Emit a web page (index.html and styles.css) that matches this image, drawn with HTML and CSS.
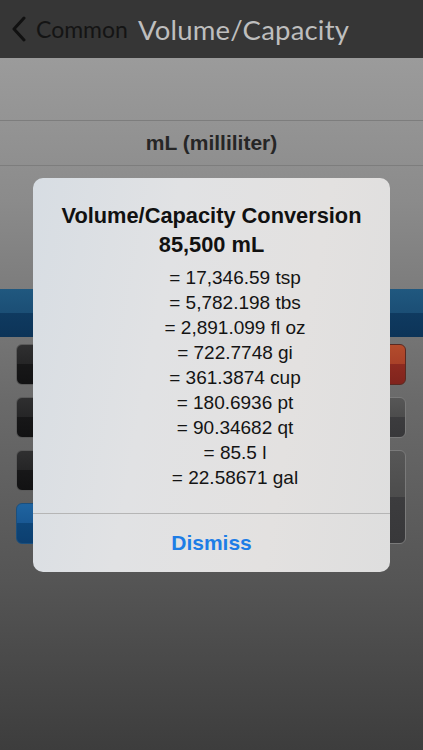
FILE: index.html
```html
<!DOCTYPE html>
<html lang="en">
<head>
  <meta charset="UTF-8" />
  <title>Volume/Capacity</title>
  <meta name="viewport" content="width=device-width, initial-scale=1.0">
  <link rel="stylesheet" href="styles.css">
</head>
<body>
  <div class="screen">
    <div class="navbar">
      <span class="back">
        <svg width="16" height="26" viewBox="0 0 16 26"><path d="M13 2 L3 13 L13 24" fill="none" stroke="#111" stroke-width="3" stroke-linecap="round" stroke-linejoin="round"/></svg>
        Common
      </span>
      <span class="title">Volume/Capacity</span>
    </div>

    <div class="top-gap"></div>
    <div class="unit-row">mL (milliliter)</div>
    <div class="unit-row">tsp (US teaspoon)</div>
    <div class="spacer"></div>

    <div class="value-bar"></div>

    <div class="keypad">
      <div class="key dark"></div>
      <div class="key dark"></div>
      <div class="key dark"></div>
      <div class="key red"></div>
      <div class="key dark"></div>
      <div class="key dark"></div>
      <div class="key dark"></div>
      <div class="key gray"></div>
      <div class="key dark"></div>
      <div class="key dark"></div>
      <div class="key dark"></div>
      <div class="key gray tall"></div>
      <div class="key blue"></div>
      <div class="key dark"></div>
      <div class="key dark"></div>
    </div>

    <!-- alert sits over the converter -->
    <div class="alert">
      <div class="alert-body">
        <div class="alert-title">Volume/Capacity Conversion<br>85,500 mL</div>
        <div class="results">
          = 17,346.59 tsp<br>
          = 5,782.198 tbs<br>
          = 2,891.099 fl oz<br>
          = 722.7748 gi<br>
          = 361.3874 cup<br>
          = 180.6936 pt<br>
          = 90.34682 qt<br>
          = 85.5 l<br>
          = 22.58671 gal
        </div>
      </div>
      <div class="alert-button">Dismiss</div>
    </div>
  </div>
</body>
</html>
```

FILE: styles.css
```css
body {
  margin: 0;
  font-family: "Liberation Sans", Arial, sans-serif;
  background: #3d3d3d;
}

.screen {
  position: relative;
  width: 423px;
  height: 750px;
  overflow: hidden;
  background: linear-gradient(to bottom, #9b9b9b 58px, #8b8b8b 200px, #6a6a6a 400px, #555 580px, #3d3d3d 750px);
}

.navbar {
  height: 58px;
  background: #363636;
  display: flex;
  align-items: center;
  padding-left: 11px;
  font-family: Lato, "Open Sans", sans-serif;
}

.back {
  display: flex;
  align-items: center;
  gap: 9px;
  color: #141414;
  font-size: 23px;
}

.title {
  margin-left: 10px;
  color: #bebebe;
  font-size: 27.5px;
  letter-spacing: 0.2px;
}

.top-gap {
  height: 62px;
}

.unit-row {
  height: 44px;
  border-top: 1px solid #7d7d7d;
  display: flex;
  align-items: center;
  justify-content: center;
  font-size: 21px;
  font-weight: bold;
  color: #262626;
}

.spacer {
  height: 79px;
}

.value-bar {
  height: 48px;
  background: linear-gradient(to bottom, #20587f 0%, #1b4e75 50%, #0f3a60 50%, #0d3458 100%);
}

.keypad {
  display: grid;
  grid-template-columns: repeat(4, 1fr);
  grid-auto-rows: 41px;
  gap: 12px 10px;
  padding: 7px 17px 0 16px;
}

.key {
  border-radius: 6px;
  border: 1px solid #5a5a5a;
}

.key.dark {
  background: linear-gradient(to bottom, #2f2f30 0%, #252526 50%, #171718 50%, #121213 100%);
}

.key.red {
  border-color: #5a2a22;
  background: linear-gradient(to bottom, #b34c2c 0%, #a84028 50%, #8d2a20 50%, #80241d 100%);
}

.key.gray {
  border-color: #7a7a7a;
  background: linear-gradient(to bottom, #575757 0%, #4c4c4c 50%, #3c3c3e 50%, #38383a 100%);
}

.key.tall {
  grid-row: span 2;
}

.key.blue {
  border-color: #1b4f7d;
  background: linear-gradient(to bottom, #1f64a0 0%, #195893 50%, #0e4679 50%, #0c3f70 100%);
}

.alert {
  position: absolute;
  left: 33px;
  top: 178px;
  width: 357px;
  height: 394px;
  border-radius: 10px;
  overflow: hidden;
  background: linear-gradient(100deg, #d7dde3 0%, #e1e2e4 35%, #e3e1e0 70%, #dedede 100%);
  display: flex;
  flex-direction: column;
}

.alert-body {
  height: 335px;
  border-bottom: 1px solid #b5b5b5;
  text-align: center;
  color: #111;
}

.alert-title {
  margin-top: 23px;
  font-size: 21.8px;
  font-weight: bold;
  line-height: 29px;
}

.results {
  margin-top: 6px;
  padding-left: 47px;
  font-size: 19px;
  line-height: 25px;
  color: #141414;
}

.alert-button {
  flex: 1;
  display: flex;
  align-items: center;
  justify-content: center;
  color: #1d7de6;
  font-size: 21px;
  font-weight: bold;
}
```
